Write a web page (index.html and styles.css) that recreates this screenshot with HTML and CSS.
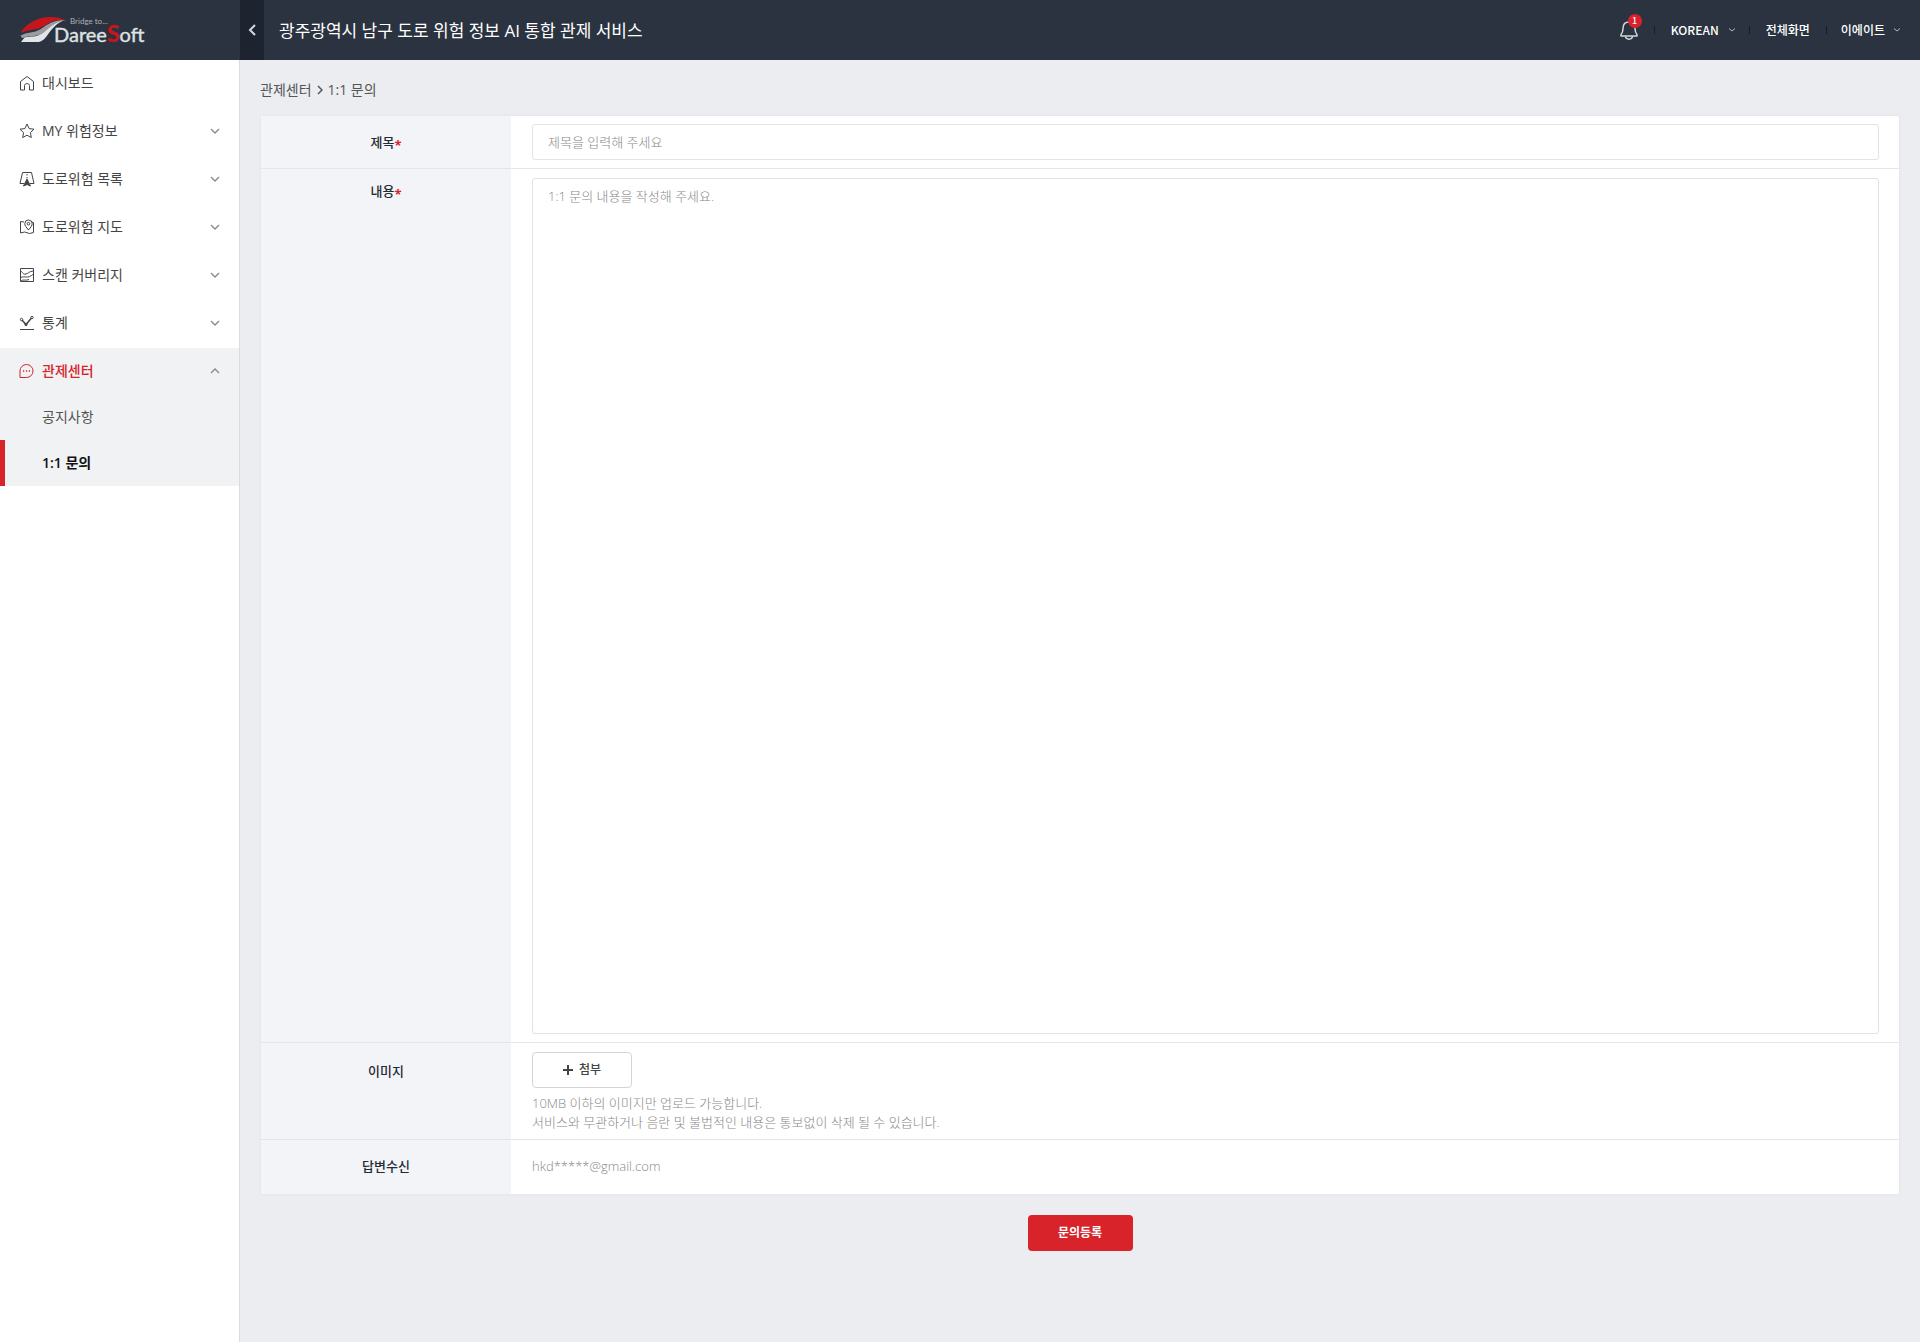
FILE: index.html
```html
<!DOCTYPE html>
<html lang="ko">
<head>
<meta charset="utf-8">
<meta name="viewport" content="width=device-width, initial-scale=1">
<title>1:1 문의</title>
<link rel="stylesheet" href="styles.css">
</head>
<body>
<header class="topbar">
  <a class="logo" href="#" aria-label="DareeSoft">
    <svg width="130" height="32" viewBox="0 0 130 32">
      <path fill="#e2e4e6" d="M1 28L4.500 23.500C11 21.500 16 24 21 19.500C27 14 31 8 45 6C36 9 32 15 27.500 21C23.500 26.500 21 28 17 28Z"/>
      <path fill="#9a9c9f" d="M0.500 21.500C7 18 14 19 20 15.500C28 10 34 5.500 46 6C35 8 30 13 24 18.500C18 23.500 10 21 4.500 23.500L2 24Z"/>
      <path fill="#c4161c" d="M0.500 18.500C7 9 18 3 30 3C37 3 43 4.500 46 7C38 4.500 31 7.500 25 11.500C18 16.500 10 15 3.500 18Z"/>
      <text class="logo-tag" x="50" y="10">Bridge to...</text>
      <text class="logo-name" x="34" y="28">Daree<tspan class="logo-s">S</tspan>oft</text>
    </svg>
  </a>
  <button class="collapse" type="button" aria-label="메뉴 접기">
    <svg width="10" height="14" viewBox="0 0 10 14"><path d="M8 2L3 7L8 12" fill="none" stroke="#d5d8dc" stroke-width="2"/></svg>
  </button>
  <h1 class="title">광주광역시 남구 도로 위험 정보 AI 통합 관제 서비스</h1>
  <div class="tools">
    <button class="bell" type="button" aria-label="알림">
      <svg width="18" height="20" viewBox="0 0 18 20" fill="none" stroke="#d5d8dc" stroke-width="1.500"><path d="M1 14.500C2.500 13 3 12 3 8.500C3 4.500 5 2 9 2S15 4.500 15 8.500C15 12 15.500 13 17 14.500V16H1Z" stroke-linejoin="round"/><path d="M5.500 16.500C6 20 12 20 12.500 16.500"/></svg>
      <span class="badge">1</span>
    </button>
    <span class="rule"></span>
    <label class="lang">
      <select aria-label="언어"><option>KOREAN</option></select>
      <svg class="caret" width="8" height="6" viewBox="0 0 8 6"><path d="M1 1.500L4 4L7 1.500"/></svg>
    </label>
    <span class="rule"></span>
    <button class="tool" type="button">전체화면</button>
    <span class="rule"></span>
    <button class="tool user" type="button">이에이트
      <svg class="caret" width="8" height="6" viewBox="0 0 8 6"><path d="M1 1.500L4 4L7 1.500"/></svg>
    </button>
  </div>
</header>
<div class="layout">
  <nav class="sidebar">
    <a class="item" href="#">
      <svg class="icon" viewBox="0 0 16 16"><path d="M1.500 6.500L8 1.500L14.500 6.500V15H10.500V10.500C10.500 8 5.500 8 5.500 10.500V15H1.500Z"/></svg>
      <span>대시보드</span>
    </a>
    <a class="item" href="#">
      <svg class="icon" viewBox="0 0 16 16"><path d="M8 1L10.100 5.600L15 6.200L11.400 9.600L12.300 14.600L8 12.200L3.700 14.600L4.600 9.600L1 6.200L5.900 5.600Z"/></svg>
      <span>MY 위험정보</span>
      <svg class="arrow" viewBox="0 0 10 6"><path d="M1 1L5 5L9 1"/></svg>
    </a>
    <a class="item" href="#">
      <svg class="icon" viewBox="0 0 16 16"><path d="M5 12.500H1L3.500 1.500H12.500L15 12.500H11M8 3V4.500M8 6V7.500"/><path class="solid" d="M8 8L11.500 15L8 13.500L4.500 15Z"/></svg>
      <span>도로위험 목록</span>
      <svg class="arrow" viewBox="0 0 10 6"><path d="M1 1L5 5L9 1"/></svg>
    </a>
    <a class="item" href="#">
      <svg class="icon" viewBox="0 0 16 16"><path d="M5 3L1.500 2.500V14L5.500 13L10.500 14.500L14.500 13.500V3.500L13 3.200"/><path d="M9.500 11C7 8 5.800 6.500 5.800 4.700A3.700 3.700 0 0 1 13.200 4.700C13.200 6.500 12 8 9.500 11Z"/><circle cx="9.500" cy="4.700" r="1.300"/></svg>
      <span>도로위험 지도</span>
      <svg class="arrow" viewBox="0 0 10 6"><path d="M1 1L5 5L9 1"/></svg>
    </a>
    <a class="item" href="#">
      <svg class="icon" viewBox="0 0 16 16"><path d="M1.500 1.500H14.500V14.500H1.500ZM1.500 4C4 5 4 8 7 7S10 4.500 14.500 4M1.500 10.500C6 8.500 8 12.500 14.500 7M2 14C4 12 7 14 10 12.500"/></svg>
      <span>스캔 커버리지</span>
      <svg class="arrow" viewBox="0 0 10 6"><path d="M1 1L5 5L9 1"/></svg>
    </a>
    <a class="item" href="#">
      <svg class="icon" viewBox="0 0 16 16"><path d="M1 14.500H15"/><path d="M3 5L7 9.500L12.500 3" stroke-width="1.500"/><circle cx="2.500" cy="4.500" r="1.200"/><circle cx="7" cy="9.500" r="1.200"/><circle cx="13" cy="2.500" r="1.200"/></svg>
      <span>통계</span>
      <svg class="arrow" viewBox="0 0 10 6"><path d="M1 1L5 5L9 1"/></svg>
    </a>
    <div class="group">
      <a class="item open" href="#">
        <svg class="icon" viewBox="0 0 16 16"><path d="M1 14.500V8A6.500 6.500 0 1 1 7.500 14.500Z"/><path d="M4 8H5.200M6.900 8H8.100M9.800 8H11" stroke-width="1.500"/></svg>
        <span>관제센터</span>
        <svg class="arrow" viewBox="0 0 10 6"><path d="M1 5L5 1L9 5"/></svg>
      </a>
      <a class="sub" href="#">공지사항</a>
      <a class="sub current" href="#">1:1 문의</a>
    </div>
  </nav>
  <main class="content">
    <div class="crumbs">
      <span>관제센터</span>
      <svg width="6" height="10" viewBox="0 0 6 10"><path d="M1 1L5 5L1 9" fill="none" stroke="#555" stroke-width="1.500"/></svg>
      <span>1:1 문의</span>
    </div>
    <form>
      <div class="card">
        <div class="row">
          <label class="head" for="subject">제목<span class="req">*</span></label>
          <div class="cell"><input class="field" id="subject" type="text" placeholder="제목을 입력해 주세요"></div>
        </div>
        <div class="row">
          <label class="head head-top" for="body">내용<span class="req">*</span></label>
          <div class="cell cell-tall"><textarea class="field area" id="body" placeholder="1:1 문의 내용을 작성해 주세요."></textarea></div>
        </div>
        <div class="row">
          <div class="head head-file">이미지</div>
          <div class="cell cell-tall">
            <button class="attach" type="button">
              <svg width="10" height="10" viewBox="0 0 10 10"><path d="M5 0V10M0 5H10" stroke="#444" stroke-width="2"/></svg>
              첨부
            </button>
            <p class="hint">10MB 이하의 이미지만 업로드 가능합니다.<br>서비스와 무관하거나 음란 및 불법적인 내용은 통보없이 삭제 될 수 있습니다.</p>
          </div>
        </div>
        <div class="row">
          <div class="head">답변수신</div>
          <div class="cell mail">hkd*****@gmail.com</div>
        </div>
      </div>
      <button class="submit" type="submit">문의등록</button>
    </form>
  </main>
</div>
</body>
</html>
```
FILE: styles.css
```css
* { box-sizing: border-box; }

body {
  margin: 0;
  min-height: 100vh;
  display: flex;
  flex-direction: column;
  background: #ebedf1;
  color: #444;
  font-family: "Open Sans", "Noto Sans CJK KR", sans-serif;
  font-size: 14px;
  line-height: 20px;
}

a { color: inherit; text-decoration: none; }

button, input, textarea, select { font: inherit; color: inherit; }

button, select {
  border: 0;
  padding: 0;
  background: none;
  cursor: pointer;
}

.topbar {
  display: flex;
  align-items: center;
  height: 60px;
  background: #2a333f;
  color: #fff;
}

.logo {
  display: flex;
  width: 240px;
  padding-left: 20px;
}

.logo-tag { font: 8px Lato, sans-serif; fill: #aeb3b9; }
.logo-name { font: 20px Lato, sans-serif; fill: #dfe1e3; stroke: #dfe1e3; stroke-width: 0.4px; }
.logo-s { font-size: 23px; font-weight: 700; fill: #c4161c; stroke: #c4161c; }

.collapse {
  display: flex;
  align-items: center;
  justify-content: center;
  width: 24px;
  height: 60px;
  background: #1e242f;
}

.title {
  flex: 1;
  margin: 0;
  padding: 2px 0 0 15px;
  font-size: 17px;
  font-weight: 400;
}

.tools {
  display: flex;
  align-items: center;
  padding-right: 19px;
  font-family: "Noto Sans CJK KR", sans-serif;
  font-size: 12px;
  font-weight: 500;
}

.bell {
  position: relative;
  display: flex;
  margin-right: 16px;
}

.badge {
  position: absolute;
  top: -6px;
  right: -4px;
  width: 14px;
  height: 14px;
  border-radius: 50%;
  background: #d8232a;
  color: #fff;
  font-size: 9px;
  line-height: 14px;
}

.rule {
  width: 1px;
  height: 8px;
  background: #171c24;
}

.lang {
  display: flex;
  align-items: center;
  gap: 8px;
  padding: 0 13px 0 16px;
}

.lang select { appearance: none; }

.caret { fill: none; stroke: #b4b9c0; }

.tool { padding: 0 16px; }

.user {
  display: flex;
  align-items: center;
  gap: 8px;
  padding: 0 0 0 14px;
}

.layout {
  flex: 1;
  display: flex;
}

.sidebar {
  width: 240px;
  border-right: 1px solid #d9dbdf;
  background: #fff;
}

.item {
  display: flex;
  align-items: center;
  gap: 7px;
  height: 46px;
  margin-bottom: 2px;
  padding: 0 19px;
}

.icon {
  width: 16px;
  height: 16px;
  fill: none;
  stroke: currentColor;
}

.solid { fill: currentColor; }

.arrow {
  width: 10px;
  height: 6px;
  margin-left: auto;
  fill: none;
  stroke: #888;
  stroke-width: 1.3px;
}

.group { background: #f0f2f4; }

.open {
  margin: 0;
  color: #d8232a;
  font-weight: 500;
}

.sub {
  display: flex;
  align-items: center;
  height: 46px;
  padding-left: 42px;
  color: #555;
}

.current {
  padding-left: 37px;
  border-left: 5px solid #d8232a;
  color: #111;
  font-weight: 600;
}

.content {
  flex: 1;
  padding: 20px 20px 90px;
}

.crumbs {
  display: flex;
  align-items: center;
  gap: 5px;
  margin-bottom: 16px;
  color: #555;
}

.card {
  margin: 0 1px 21px;
  border-radius: 2px;
  background: #fff;
  box-shadow: 0 0 3px #dfe1e5;
  font-size: 13px;
}

.row {
  display: grid;
  grid-template-columns: 250px 1fr;
  border-bottom: 1px solid #e5e6e8;
}

.row:last-child { border-bottom: 0; }

.head {
  padding-top: 16px;
  background: #f3f4f7;
  color: #222b35;
  font-weight: 500;
  text-align: center;
}

.head-top { padding-top: 12px; }

.head-file { padding-top: 18px; }

.req {
  color: #d8232a;
  font-weight: 700;
  line-height: 1;
  vertical-align: -3px;
}

.cell {
  padding: 8px 20px 8px 21px;
  color: #999;
}

.cell-tall { padding-top: 9px; }

.field {
  display: block;
  width: 100%;
  height: 36px;
  padding: 0 15px;
  border: 1px solid #e2e3e5;
  border-radius: 3px;
  background: #fff;
}

.field::placeholder { color: #888; font-weight: 300; }

.area {
  height: 856px;
  padding: 7px 15px;
  resize: none;
}

.attach {
  display: flex;
  align-items: center;
  justify-content: center;
  gap: 6px;
  width: 100px;
  height: 36px;
  border: 1px solid #d3d5d8;
  border-radius: 4px;
  color: #444;
  font-size: 12px;
  font-weight: 500;
}

.hint {
  margin: 6px 0 0;
  color: #888;
  font-weight: 300;
  line-height: 19px;
}

.row .cell:has(.hint) { padding-bottom: 7px; }

.mail {
  padding-top: 16px;
  padding-bottom: 18px;
  color: #888;
  font-weight: 300;
}

.submit {
  display: block;
  width: 105px;
  height: 36px;
  margin: 0 auto;
  border-radius: 4px;
  background: #d8232a;
  color: #fff;
  font-size: 12px;
  font-weight: 700;
}
```
